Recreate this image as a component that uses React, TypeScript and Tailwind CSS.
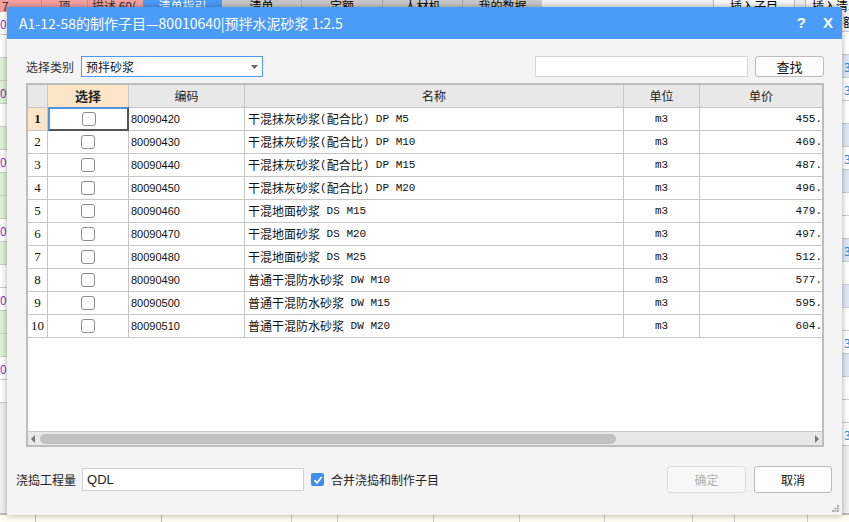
import React from "react";

const rows: [string, string, string][] = [
  ["80090420", "干混抹灰砂浆(配合比) DP M5", "455."],
  ["80090430", "干混抹灰砂浆(配合比) DP M10", "469."],
  ["80090440", "干混抹灰砂浆(配合比) DP M15", "487."],
  ["80090450", "干混抹灰砂浆(配合比) DP M20", "496."],
  ["80090460", "干混地面砂浆 DS M15", "479."],
  ["80090470", "干混地面砂浆 DS M20", "497."],
  ["80090480", "干混地面砂浆 DS M25", "512."],
  ["80090490", "普通干混防水砂浆 DW M10", "577."],
  ["80090500", "普通干混防水砂浆 DW M15", "595."],
  ["80090510", "普通干混防水砂浆 DW M20", "604."],
];

const cjk = "font-['Noto_Sans_CJK_SC',sans-serif]";
const mono = "font-['Liberation_Mono','Noto_Sans_CJK_SC',monospace]";

// SimSun-like look: CJK at full width, ascii as narrow mono
function Mixed({ text }: { text: string }) {
  const parts = text.split(/([\x20-\x7e]+)/).filter(Boolean);
  return (
    <>
      {parts.map((p, i) =>
        /[\x20-\x7e]/.test(p[0]) ? (
          <span key={i} className={`${mono} text-[11px] whitespace-pre`}>
            {p}
          </span>
        ) : (
          <span key={i}>{p}</span>
        )
      )}
    </>
  );
}

function Background() {
  const leftRows = ["bg-white", "bg-white", "bg-[#dcf2d2]", "bg-[#dcf2d2]", "bg-white", "bg-[#dcf2d2]", "bg-white", "bg-[#dcf2d2]", "bg-[#dcf2d2]", "bg-white", "bg-[#dcf2d2]", "bg-white", "bg-white", "bg-[#dcf2d2]", "bg-[#dcf2d2]", "bg-white", "bg-white"];
  const rightRows = ["bg-white", "bg-[#dce9f5]", "bg-white", "bg-white", "bg-[#dce9f5]", "bg-white", "bg-[#dce9f5]", "bg-white", "bg-white", "bg-[#dce9f5]", "bg-white", "bg-[#dce9f5]", "bg-white", "bg-white", "bg-[#dce9f5]", "bg-white", "bg-white", "bg-white"];
  return (
    <div className={`w-full h-full flex flex-col ${cjk} text-[12px]`}>
      {/* tab strip, mostly hidden under the dialog */}
      <div className="h-[12px] flex leading-[12px] shrink-0">
        <div className="w-[143px] bg-[#f4a0a0] flex text-[#333]">
          <div className="w-[42px] border-r border-[#d88] pl-[2px]">7</div>
          <div className="w-[46px] border-r border-[#d88] text-center">项</div>
          <div className="flex-1 pl-[4px]">描述 60(</div>
        </div>
        <div className="w-[79px] bg-[#4a9cf8] text-white text-center">清单指引</div>
        <div className="w-[80px] bg-[#c8c8c8] border-r border-[#aaa] text-center">清单</div>
        <div className="w-[81px] bg-[#c8c8c8] border-r border-[#aaa] text-center">定额</div>
        <div className="w-[80px] bg-[#c8c8c8] border-r border-[#aaa] text-center">人材机</div>
        <div className="w-[79px] bg-[#c8c8c8] text-center">我的数据</div>
        <div className="flex-1 bg-[#f0f0f0] flex justify-end">
          <div className="w-[82px] border-x border-[#bbb] bg-[#f7f7f7] text-center">插入子目</div>
          <div className="w-[44px] ml-[10px] border-l border-[#bbb] bg-[#f7f7f7] pl-[6px] overflow-hidden whitespace-nowrap">插入清单</div>
        </div>
      </div>
      <div className="flex-1 flex min-h-0">
        <div className="w-[20px] flex flex-col border-r border-[#ccc]">
          {leftRows.map((c, i) => (
            <div key={i} className={`h-[23px] shrink-0 border-b border-[#ccc] ${c} text-[#9b30c0] leading-[23px]`}>
              {i % 3 === 0 ? "0" : ""}
            </div>
          ))}
        </div>
        <div className="flex-1 bg-white" />
        <div className="w-[40px] flex flex-col">
          <div className="h-[20px] shrink-0 bg-[#f4f4f4] border-b border-[#ccc] pl-[34px] leading-[20px] overflow-hidden">额</div>
          {rightRows.map((c, i) => (
            <div key={i} className={`h-[23px] shrink-0 border-b border-[#ccc] ${c} pl-[35px] text-[#1a8ad8] leading-[23px] overflow-hidden`}>
              {i === 2 ? "39" : i % 4 === 1 ? "3" : ""}
            </div>
          ))}
        </div>
      </div>
      <div className="h-[9px] shrink-0 bg-[#fdfdef] border-t-2 border-[#bcbcbc] flex">
        <div className="w-[36px] border-r border-[#bbb]" />
        <div className="w-[126px] border-r border-[#bbb] border-t-2 border-t-[#3d8ee8] -mt-[2px]" />
        <div className="w-[130px] border-r border-[#ccc]" />
        <div className="w-[46px] border-r border-[#ccc]" />
        <div className="w-[96px] border-r border-[#ccc]" />
        <div className="w-[86px] border-r border-[#ccc]" />
        <div className="w-[85px] border-r border-[#ccc]" />
        <div className="w-[88px] border-r border-[#ccc]" />
        <div className="w-[42px] border-r border-[#ccc]" />
        <div className="w-[73px] border-r border-[#ccc]" />
        <div className="flex-1" />
      </div>
    </div>
  );
}

function Checkbox() {
  return <div className="w-[14px] h-[14px] rounded-[3px] border border-[#8c8c8c] bg-white" />;
}

function Grid() {
  const cols = "grid grid-cols-[20px_81px_116px_379px_76px_1fr]";
  return (
    <div className="h-[364px] border-2 border-[#bdbdbd] bg-white flex flex-col overflow-hidden">
      <div className={`${cols} h-[23px] shrink-0 border-b border-[#c6c6c6] bg-[#e8e8e8] text-[12px] text-[#222] ${cjk}`}>
        <div className="border-r border-[#c6c6c6]" />
        <div className="border-r border-[#c6c6c6] bg-[#fde5c8] flex items-center justify-center font-bold text-[13px]">选择</div>
        <div className="border-r border-[#c6c6c6] flex items-center justify-center">编码</div>
        <div className="border-r border-[#c6c6c6] flex items-center justify-center">名称</div>
        <div className="border-r border-[#c6c6c6] flex items-center justify-center">单位</div>
        <div className="flex items-center justify-center">单价</div>
      </div>
      {rows.map(([code, name, price], i) => (
        <div key={code} className={`${cols} h-[23px] shrink-0 border-b border-[#c6c6c6] text-[#111]`}>
          <div
            className={`border-r border-[#c6c6c6] flex items-center justify-center font-['Liberation_Serif',serif] text-[13px] ${
              i === 0 ? "bg-[#fde5c8] font-bold" : ""
            }`}
          >
            {i + 1}
          </div>
          <div
            className={`flex items-center justify-center ${
              i === 0
                ? "border-2 border-t-[#4f94e0] border-l-[#4f94e0] border-r-[#555] border-b-[#555] -mt-[1px] -mb-[1px]"
                : "border-r border-[#c6c6c6]"
            }`}
          >
            <Checkbox />
          </div>
          <div className="border-r border-[#c6c6c6] flex items-center pl-[2px] font-['Liberation_Sans',sans-serif] text-[11px]">{code}</div>
          <div className={`border-r border-[#c6c6c6] flex items-center pl-[3px] text-[12px] whitespace-nowrap ${cjk}`}>
            <Mixed text={name} />
          </div>
          <div className={`border-r border-[#c6c6c6] flex items-center justify-center text-[11px] ${mono}`}>m3</div>
          <div className={`flex items-center justify-end text-[11px] ${mono}`}>{price}</div>
        </div>
      ))}
      <div className="flex-1" />
      <div className="h-[14px] shrink-0 border-t border-[#c8c8c8] bg-[#e8e8e8] flex items-center px-[3px]">
        <svg width="5" height="8" viewBox="0 0 5 8">
          <path d="M4 0 L0 4 L4 8 Z" fill="#777" />
        </svg>
        <div className="w-[576px] h-[10px] rounded-full bg-[#c1c1c1] ml-[4px]" />
        <div className="flex-1" />
        <svg width="5" height="8" viewBox="0 0 5 8">
          <path d="M1 0 L5 4 L1 8 Z" fill="#777" />
        </svg>
      </div>
    </div>
  );
}

export default function App() {
  return (
    <div className="relative w-[849px] h-[522px] overflow-hidden bg-[#f0f0f0]">
      <Background />
      {/* dialog window */}
      <div className={`absolute left-[7px] top-[7px] w-[835px] h-[508px] bg-[#f4f4f4] flex flex-col shadow-[0_0_6px_rgba(0,0,0,0.35)] ${cjk}`}>
        <div className="h-[32px] shrink-0 bg-[#4a9cf8] flex items-center pl-[12px] pr-[9px] text-white">
          <span className="text-[14px]">A1-12-58的制作子目—80010640|预拌水泥砂浆 1:2.5</span>
          <span className="ml-auto font-['Liberation_Sans',sans-serif] font-bold text-[15px]">?</span>
          <span className="ml-[17px] font-['Liberation_Sans',sans-serif] font-bold text-[15px]">X</span>
        </div>
        <div className="flex-1 flex flex-col pt-[17px]">
          <div className="flex items-center h-[21px] pl-[19px] pr-[18px] text-[12px] text-[#333]">
            <span>选择类别</span>
            <div className="ml-[7px] w-[182px] h-[21px] border border-[#4a9cf8] bg-white flex items-center pl-[4px] pr-[4px] text-[#111]">
              <span>预拌砂浆</span>
              <svg className="ml-auto" width="7" height="4" viewBox="0 0 7 4">
                <path d="M0 0 H7 L3.5 4 Z" fill="#666" />
              </svg>
            </div>
            <div className="ml-auto w-[213px] h-[21px] border border-[#d6d6d6] bg-white" />
            <div className="ml-[7px] w-[69px] h-[21px] border border-[#bcbcbc] rounded-[3px] bg-[#fdfdfd] flex items-center justify-center text-[#111] text-[13px]">
              查找
            </div>
          </div>
          <div className="mt-[6px] pl-[19px] pr-[18px]">
            <Grid />
          </div>
          <div className="mt-[19px] flex items-center h-[27px] pl-[9px] pr-[10px] text-[12px] text-[#222]">
            <span>浇捣工程量</span>
            <div className="ml-[6px] w-[222px] h-[23px] border border-[#cfcfcf] bg-white flex items-center pl-[4px] text-[13px] font-['Liberation_Sans',sans-serif]">
              QDL
            </div>
            <div className="ml-[7px] w-[13px] h-[13px] rounded-[2px] bg-[#3d8ef0] flex items-center justify-center">
              <svg width="10" height="10" viewBox="0 0 10 10">
                <path d="M1.5 5.2 L4 7.8 L8.6 2" stroke="white" strokeWidth="1.8" fill="none" />
              </svg>
            </div>
            <span className="ml-[7px]">合并浇捣和制作子目</span>
            <div className="ml-auto w-[79px] h-[27px] border border-[#dcdcdc] rounded-[3px] bg-[#f7f7f7] flex items-center justify-center text-[#b0b0b0]">
              确定
            </div>
            <div className="ml-[8px] w-[78px] h-[27px] border border-[#bcbcbc] rounded-[3px] bg-[#fdfdfd] flex items-center justify-center text-[#111]">
              取消
            </div>
          </div>
          <div className="flex-1 flex items-end justify-end pr-[3px] pb-[3px]">
            <svg width="7" height="7" viewBox="0 0 7 7">
              <rect x="5" y="0" width="2" height="2" fill="#b0b0b0" />
              <rect x="2.5" y="2.5" width="2" height="2" fill="#b0b0b0" />
              <rect x="5" y="2.5" width="2" height="2" fill="#b0b0b0" />
              <rect x="0" y="5" width="2" height="2" fill="#b0b0b0" />
              <rect x="2.5" y="5" width="2" height="2" fill="#b0b0b0" />
              <rect x="5" y="5" width="2" height="2" fill="#b0b0b0" />
            </svg>
          </div>
        </div>
      </div>
    </div>
  );
}
